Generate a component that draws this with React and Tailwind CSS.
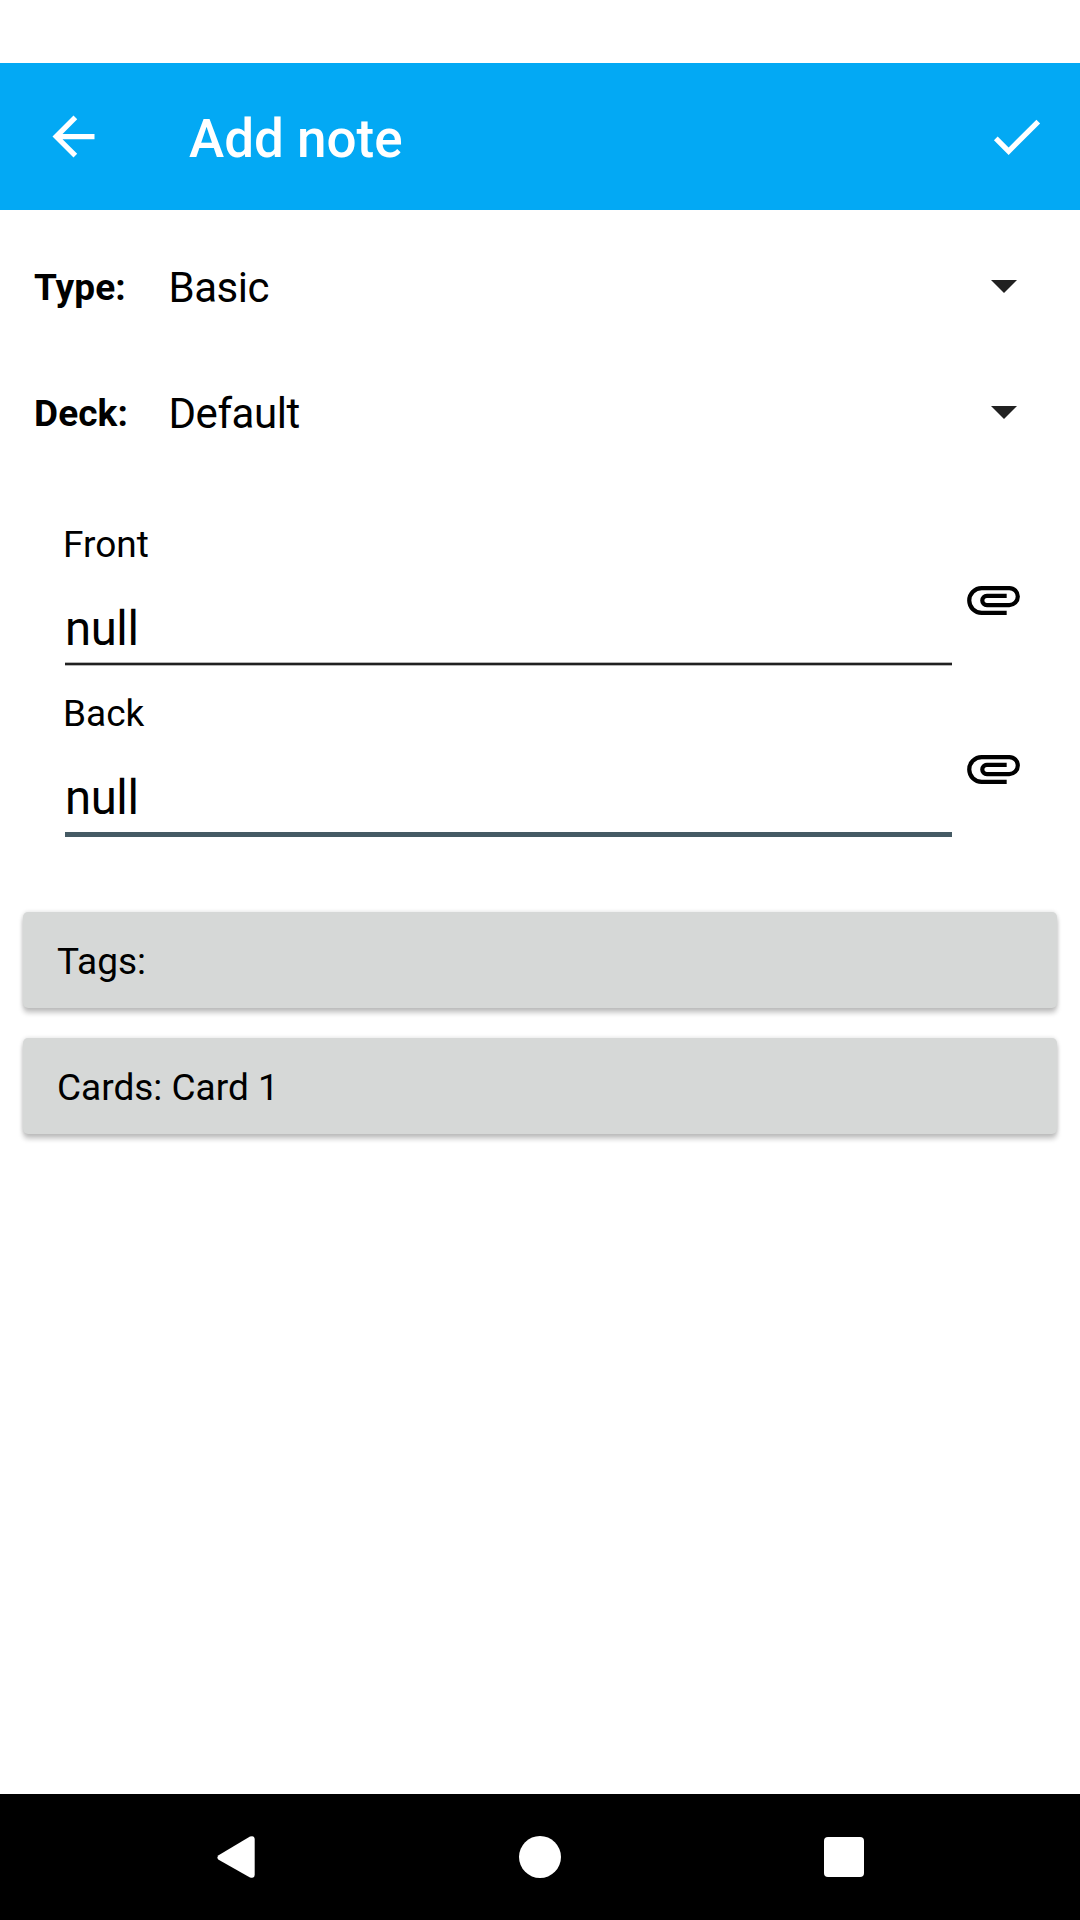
import React from "react";

function BackArrow() {
  return (
    <svg viewBox="0 0 24 24" className="size-[63px] fill-white">
      <path d="M20 11H7.83l5.59-5.59L12 4l-8 8 8 8 1.41-1.41L7.83 13H20v-2z" />
    </svg>
  );
}

function Check() {
  return (
    <svg viewBox="0 0 24 24" className="mt-[-1px] size-[63px] fill-white">
      <path d="M9 16.17L4.83 12l-1.42 1.41L9 19 21 7l-1.41-1.41z" />
    </svg>
  );
}

function Paperclip() {
  return (
    <svg
      viewBox="0 0 20 11"
      className="ml-[15px] mt-[63px] h-[29px] w-[53px] shrink-0 fill-none stroke-black stroke-[1.6]"
    >
      <path d="M15 10.2H5.5a4.7 4.7 0 0 1 0-9.4H16a3.22 3.22 0 0 1 0 6.44H7.5a1.75 1.75 0 0 1 0-3.5H15" />
    </svg>
  );
}

function SelectRow({ label, value }) {
  return (
    <div className="flex h-[126px] items-center pl-[34px] pr-[63px]">
      <span className="mt-[2px] w-[134.5px] text-[37px] font-bold tracking-[0.1px]">{label}</span>
      <span className="flex-1 text-[42px] tracking-[-0.45px]">{value}</span>
      <svg viewBox="0 0 10 5" className="mt-[-1px] h-[13px] w-[26px] fill-[#212121]">
        <path d="M0 0h10L5 5z" />
      </svg>
    </div>
  );
}

function Field({ label, value, focused }) {
  return (
    <div className="flex h-[169px] pl-[65px]">
      <div className="w-[887px]">
        <div className="-ml-[2px] h-[43px] text-[37px] leading-[43px]">{label}</div>
        <div className="mt-[35px] h-[62px] text-[47.25px] leading-[56px] tracking-[-0.4px]">{value}</div>
        {focused ? (
          <div className="h-[5px] bg-[#455a64]" />
        ) : (
          <div className="mt-[-1px] h-[4px] border-y border-[#b5b5b5] bg-[#212121]" />
        )}
      </div>
      <Paperclip />
    </div>
  );
}

function WideButton({ children }) {
  return (
    <button className="flex h-[96px] items-center rounded-[5px] bg-[#d6d8d7] pl-[34px] pt-[3px] text-left text-[37px] shadow-[0_5px_5px_rgba(0,0,0,0.22),0_0_4px_rgba(0,0,0,0.14)]">
      {children}
    </button>
  );
}

export default function App() {
  return (
    <div className="flex h-[1920px] w-[1080px] flex-col bg-white font-['Roboto',sans-serif] text-black">
      <header className="mt-[63px] flex h-[147px] items-center bg-[#03a9f4] pl-[42px] pr-[32px] text-white">
        <BackArrow />
        <h1 className="ml-[84px] mt-[6px] flex-1 text-[53px] font-medium">Add note</h1>
        <Check />
      </header>

      <main className="flex flex-1 flex-col pt-[14px]">
        <SelectRow label="Type:" value="Basic" />
        <SelectRow label="Deck:" value="Default" />
        <div className="mt-[47px]">
          <Field label="Front" value="null" />
          <Field label="Back" value="null" focused />
        </div>
        <div className="mt-[51px] flex flex-col gap-[30px] px-[23px]">
          <WideButton>Tags:</WideButton>
          <WideButton>Cards: Card 1</WideButton>
        </div>
      </main>

      <nav className="flex h-[126px] items-center bg-black pl-[217px]">
        <svg viewBox="0 0 38 42" className="h-[42px] w-[38px] fill-white">
          <path d="M1.6 19.2 33 .6Q37.5-1 37.7 3.5V38.5Q37.5 43 33 41.4L1.6 23.8Q-.8 21.5 1.6 19.2z" />
        </svg>
        <div className="ml-[264px] size-[42px] rounded-full bg-white" />
        <div className="ml-[263px] size-[40px] rounded-[4px] bg-white" />
      </nav>
    </div>
  );
}
